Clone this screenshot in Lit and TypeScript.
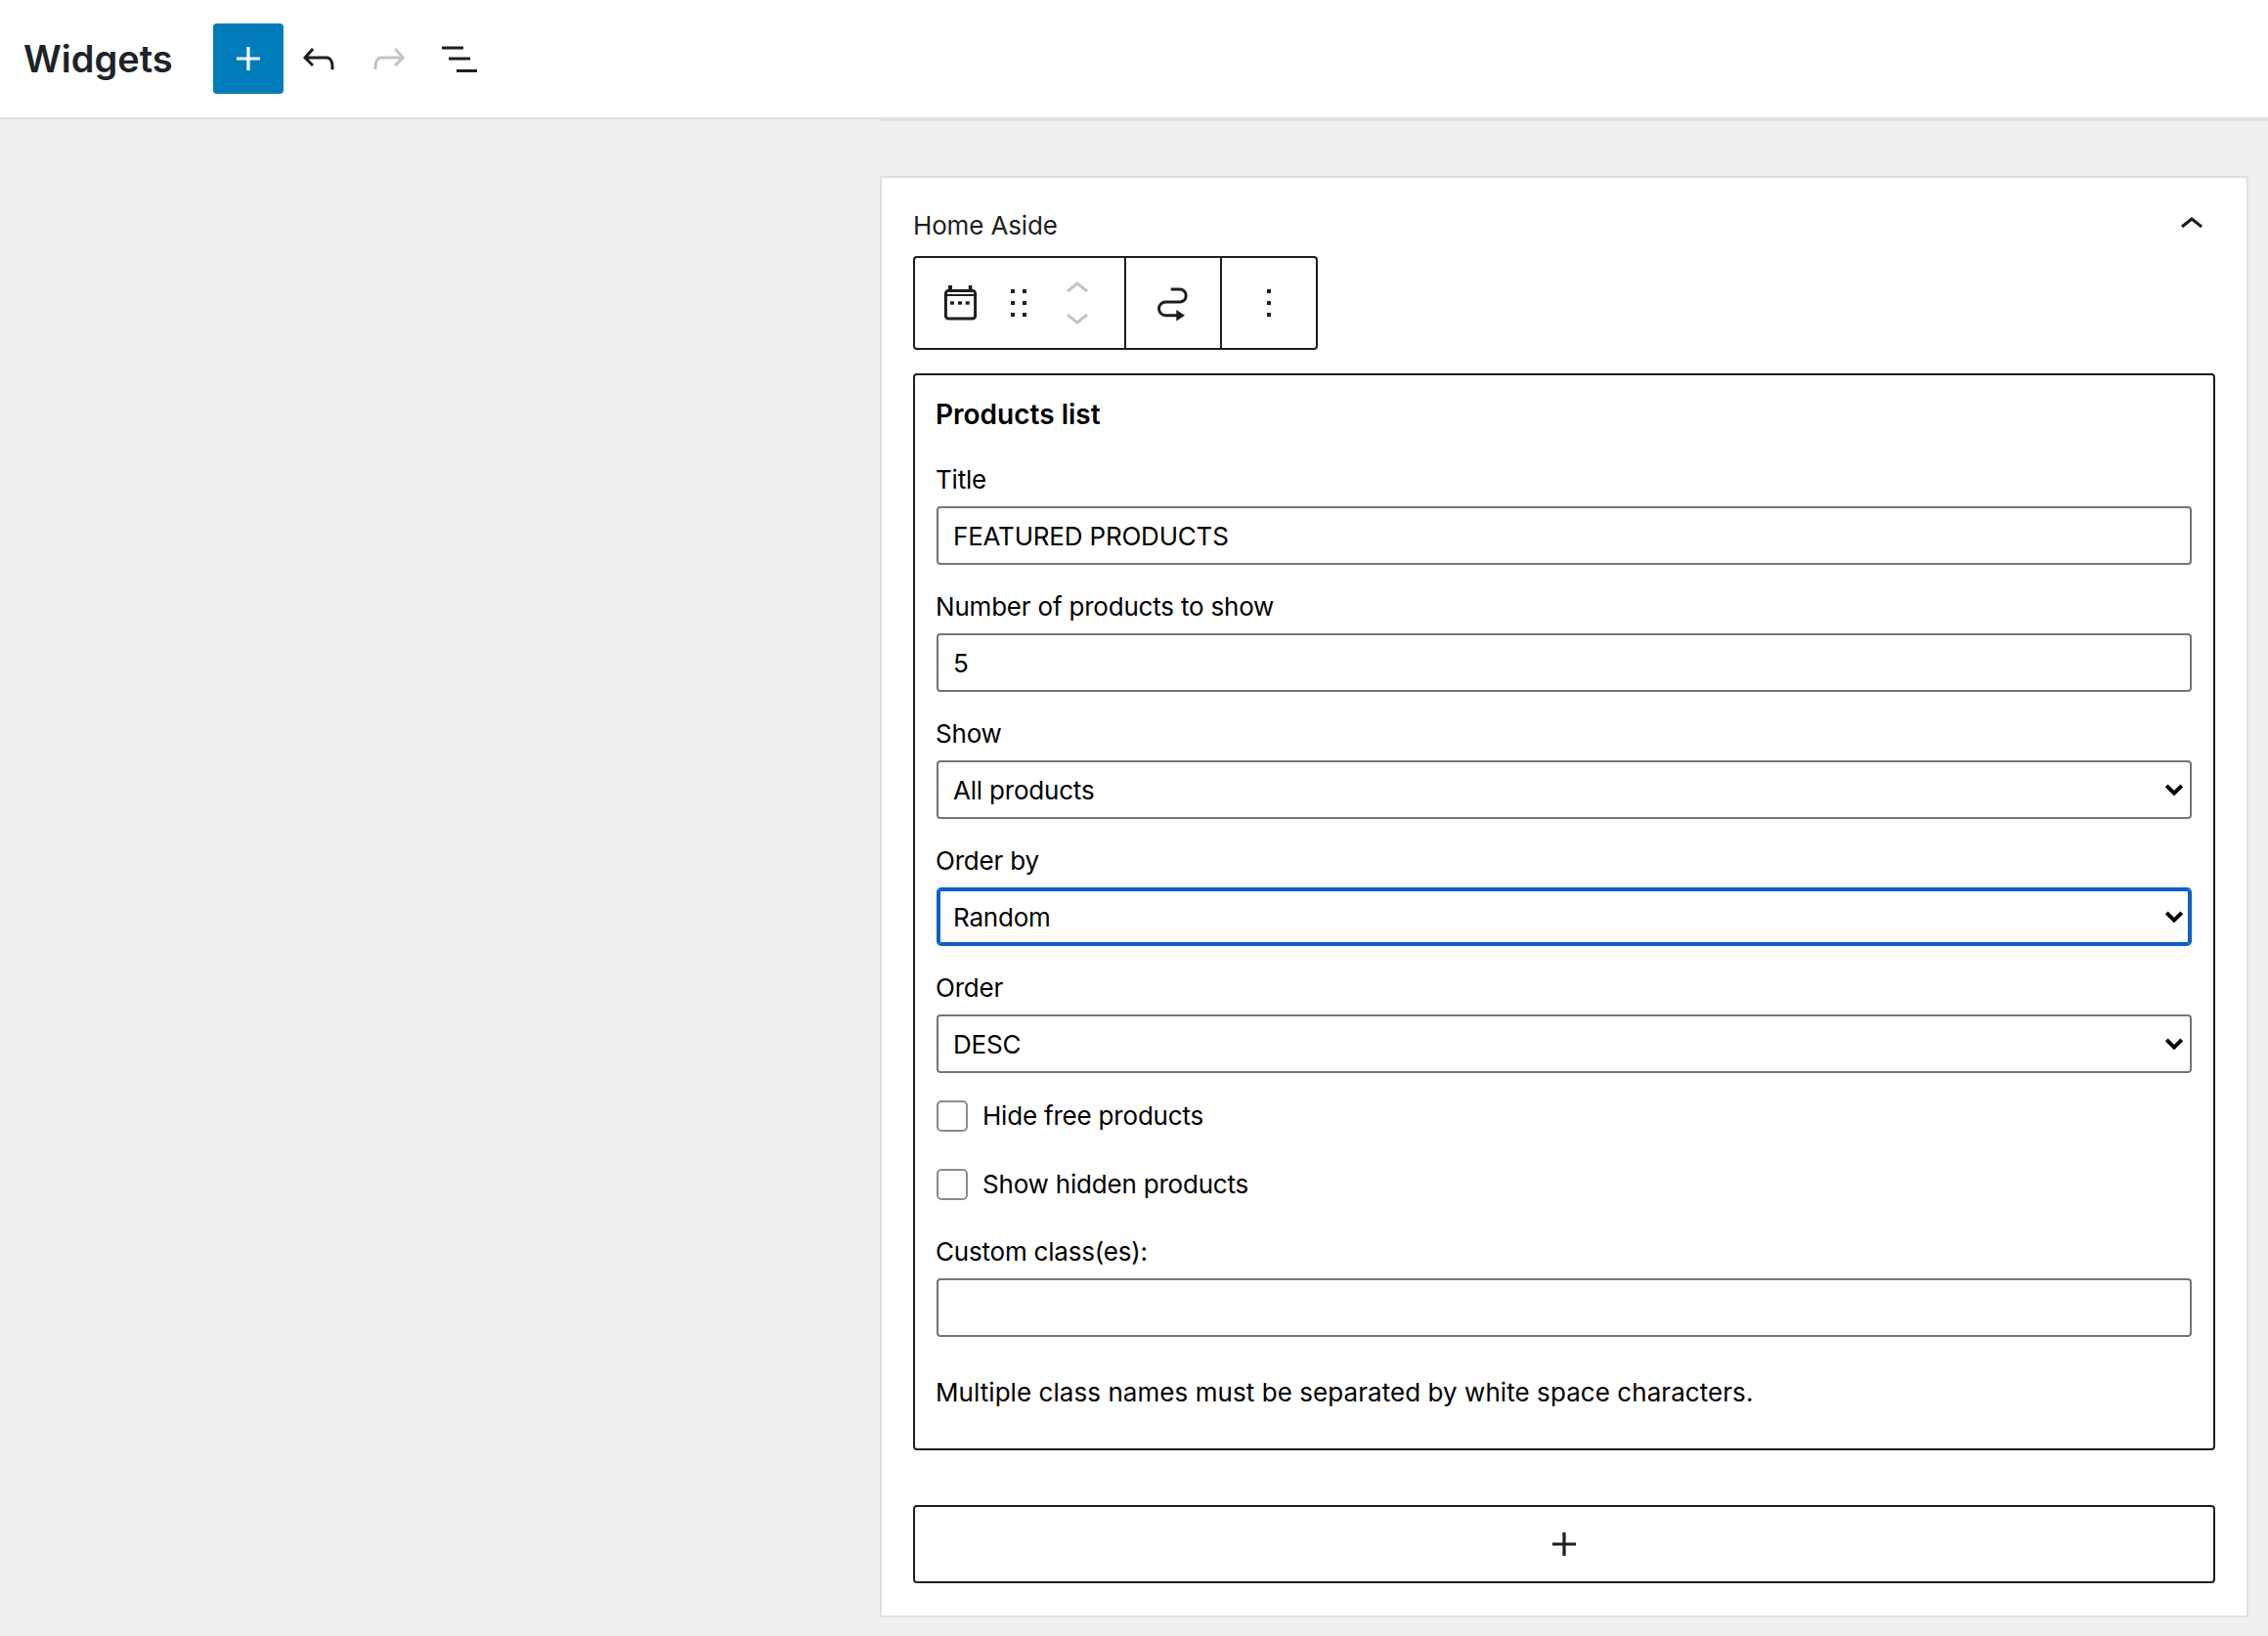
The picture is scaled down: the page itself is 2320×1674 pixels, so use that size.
import { LitElement, html, css, svg } from "lit"
import { customElement } from "lit/decorators.js"

const icon = (body: unknown, size = 48) =>
    html`<svg width=${size} height=${size} viewBox="0 0 24 24" fill="currentColor">${body}</svg>`

const plus = svg`<path d="M18 11.2h-5.2V6h-1.6v5.2H6v1.6h5.2V18h1.6v-5.2H18z" />`
const undo = svg`<path d="M18.3 11.7c-.6-.6-1.4-.9-2.3-.9H6.7l2.9-3.3-1.1-1-4.5 5L8.5 16l1-1-2.7-2.7H16c.5 0 .9.2 1.3.5 1 1 1 3.4 1 4.5v.3h1.5v-.2c0-1.5 0-4.3-1.5-5.7z" />`
const redo = svg`<path d="M15.6 6.5l-1.1 1 2.9 3.3H8c-.9 0-1.7.3-2.3.9-1.4 1.5-1.4 4.2-1.4 5.6v.2h1.5v-.3c0-1.1 0-3.5 1-4.5.3-.3.7-.5 1.3-.5h9.2L14.5 15l1.1 1.1 4.6-4.6-4.6-5z" />`
const listView = svg`<rect x="3" y="5.75" width="11" height="1.5" /><rect x="6.5" y="11.25" width="11" height="1.5" /><rect x="10.5" y="17.5" width="10.5" height="1.5" />`
const chevronUp = svg`<path d="M6.5 12.4L12 8l5.5 4.4-.9 1.2L12 10l-4.5 3.6-1-1.2z" />`
const chevronDown = svg`<path d="M17.5 11.6L12 16l-5.5-4.4.9-1.2L12 14l4.5-3.6 1 1.2z" />`
const drag = svg`<path d="M8 7h2V5H8v2zm0 6h2v-2H8v2zm0 6h2v-2H8v2zm6-14v2h2V5h-2zm0 8h2v-2h-2v2zm0 6h2v-2h-2v2z" />`
const more = svg`<path d="M13 19h-2v-2h2v2zm0-6h-2v-2h2v2zm0-6h-2V5h2v2z" />`
const calendar = svg`<rect x="4.7" y="5.75" width="15.1" height="14.3" rx="1.4" fill="none" stroke="currentColor" stroke-width="1.5" />
    <rect x="5" y="7.5" width="14.5" height="1" />
    <rect x="6" y="3" width="2" height="2.5" /><rect x="16.4" y="3" width="1.8" height="2.5" />
    <rect x="7" y="11.15" width="2" height="1.7" /><rect x="11" y="11.15" width="2" height="1.7" /><rect x="14.85" y="11.15" width="2" height="1.7" />`

@customElement("app-root")
export class AppRoot extends LitElement {
    static styles = css`
        :host {
            display: block;
            min-height: 1674px;
            background: #f0f0f0;
            font-family: Inter, "Liberation Sans", sans-serif;
            font-size: 26px;
            color: #000;
        }
        svg {
            display: block;
            flex: none;
        }

        /* Header */
        .header {
            display: flex;
            align-items: center;
            height: 120px;
            padding-left: 24px;
            background: #fff;
            border-bottom: 2px solid #e0e0e0;
        }
        .header h1 {
            width: 194px;
            margin: 0;
            font-size: 38px;
            font-weight: 600;
            color: #1d2327;
        }
        .inserter {
            display: flex;
            align-items: center;
            justify-content: center;
            width: 72px;
            height: 72px;
            border-radius: 4px;
            background: #007cba;
            color: #fff;
        }
        .tool {
            display: flex;
            align-items: center;
            justify-content: center;
            width: 72px;
            height: 72px;
            color: #1e1e1e;
        }
        .tool.off {
            color: #c4c4c4;
        }

        /* Sidebar panel */
        .main {
            display: flex;
            justify-content: flex-end;
        }
        .sidebar {
            box-sizing: border-box;
            width: 1420px;
            padding: 56px 20px 20px 0;
            border-top: 2px solid #e0e0e0;
        }
        .panel {
            padding: 24px 32px 33px;
            background: #fff;
            border: 2px solid #e0e0e0;
        }
        .panel-title {
            display: flex;
            align-items: center;
            justify-content: space-between;
            height: 48px;
            margin-bottom: 8px;
            letter-spacing: -0.15px;
            color: #1e1e1e;
        }

        /* Block toolbar */
        .toolbar {
            display: flex;
            width: 414px;
            height: 96px;
            box-sizing: border-box;
            margin-bottom: 24px;
            border: 2px solid #1e1e1e;
            border-radius: 4px;
            color: #1e1e1e;
        }
        .group {
            display: flex;
            flex: none;
            align-items: center;
            justify-content: center;
            box-sizing: border-box;
            width: 98px;
            border-left: 2px solid #1e1e1e;
        }
        .group.first {
            justify-content: flex-start;
            width: 214px;
            padding-left: 22px;
            gap: 12px;
            border-left: none;
        }
        .mover {
            color: #c4c4c4;
        }

        /* Widget form */
        .box {
            padding: 22px;
            border: 2px solid #1e1e1e;
            border-radius: 4px;
            line-height: 36px;
            letter-spacing: -0.2px;
        }
        .box h3 {
            margin: 0 0 30px -1px;
            font-size: 28px;
            line-height: 36px;
            font-weight: 600;
            letter-spacing: 0;
        }
        .field {
            position: relative;
            margin-bottom: 24px;
        }
        .field label {
            display: block;
            padding-top: 1px;
            margin: 0 0 9px -1px;
        }
        input.text,
        select {
            display: block;
            box-sizing: border-box;
            width: 100%;
            height: 60px;
            margin: 0;
            padding: 0 15px;
            background: #fff;
            border: 2px solid #757575;
            border-radius: 4px;
            outline: none;
            appearance: none;
            font: inherit;
            letter-spacing: inherit;
            line-height: 56px;
            color: #000;
        }
        select {
            padding-top: 1px;
        }
        select.focus {
            border-color: #0a5fcc;
            border-radius: 5px;
            box-shadow: inset 0 0 0 2px #0a5fcc;
        }
        .arrow {
            position: absolute;
            right: 9px;
            bottom: 24px;
            pointer-events: none;
        }
        .check {
            display: flex;
            align-items: center;
            gap: 15px;
            height: 40px;
            margin-bottom: 30px;
        }
        .check input {
            box-sizing: border-box;
            width: 32px;
            height: 32px;
            margin: 0;
            appearance: none;
            background: #fff;
            border: 2px solid #8c8c8c;
            border-radius: 5px;
        }
        .help {
            margin: 39px 0 17px -1px;
            letter-spacing: 0.06px;
        }
        .appender {
            display: flex;
            align-items: center;
            justify-content: center;
            box-sizing: border-box;
            height: 80px;
            margin-top: 56px;
            border: 2px solid #1e1e1e;
            border-radius: 4px;
            color: #1e1e1e;
        }
    `

    field(label: string, value: string) {
        return html`<div class="field">
            <label>${label}</label>
            <input class="text" type="text" .value=${value} />
        </div>`
    }

    select(label: string, value: string, focus = false) {
        return html`<div class="field">
            <label>${label}</label>
            <select class=${focus ? "focus" : ""}>
                <option>${value}</option>
            </select>
            <svg class="arrow" width="18" height="12" viewBox="0 0 18 12" fill="none" stroke="#000" stroke-width="4">
                <path d="M1.2 2 9 9.6 16.8 2" />
            </svg>
        </div>`
    }

    render() {
        return html`
            <div class="header">
                <h1>Widgets</h1>
                <div class="inserter">${icon(plus)}</div>
                <div class="tool">${icon(undo)}</div>
                <div class="tool off">${icon(redo)}</div>
                <div class="tool">${icon(listView)}</div>
            </div>
            <div class="main">
                <div class="sidebar">
                    <div class="panel">
                        <div class="panel-title">
                            <span>Home Aside</span>
                            ${icon(chevronUp)}
                        </div>
                        <div class="toolbar">
                            <div class="group first">
                                ${icon(calendar)} ${icon(drag)}
                                <svg class="mover" width="48" height="76" viewBox="0 0 24 38" fill="currentColor">
                                    ${chevronUp}
                                    <g transform="translate(0 14)">${chevronDown}</g>
                                </svg>
                            </div>
                            <div class="group">
                                <svg width="48" height="48" viewBox="0 0 48 48">
                                    <path d="M21.7 10H30.75a6.5 6.5 0 0 1 0 13H16.35a6.85 6.85 0 0 0 0 13.7H28" fill="none" stroke="currentColor" stroke-width="3" />
                                    <path d="M27.3 31 36 36.7 27.3 42.4z" fill="currentColor" />
                                </svg>
                            </div>
                            <div class="group">${icon(more)}</div>
                        </div>
                        <div class="box">
                            <h3>Products list</h3>
                            ${this.field("Title", "FEATURED PRODUCTS")}
                            ${this.field("Number of products to show", "5")}
                            ${this.select("Show", "All products")}
                            ${this.select("Order by", "Random", true)}
                            ${this.select("Order", "DESC")}
                            <div class="check"><input type="checkbox" /><span>Hide free products</span></div>
                            <div class="check"><input type="checkbox" /><span>Show hidden products</span></div>
                            ${this.field("Custom class(es):", "")}
                            <p class="help">Multiple class names must be separated by white space characters.</p>
                        </div>
                        <div class="appender">${icon(plus)}</div>
                    </div>
                </div>
            </div>
        `
    }
}
